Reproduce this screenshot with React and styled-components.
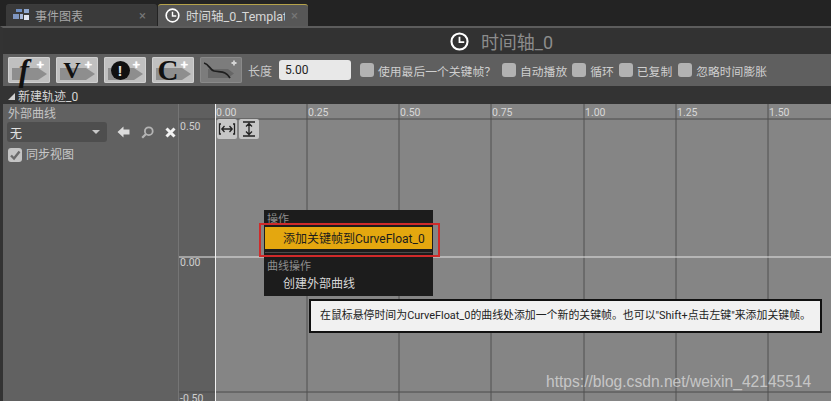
import * as React from 'react'
import styled, { createGlobalStyle } from 'styled-components'

const FONT = 'Roboto, "Noto Sans CJK SC", "Noto Sans", sans-serif'
const V_LINES = [307, 399, 491, 584, 676, 768]
const TIME_LABELS = [
  { x: 216, text: '0.00' },
  { x: 308, text: '0.25' },
  { x: 400, text: '0.50' },
  { x: 492, text: '0.75' },
  { x: 585, text: '1.00' },
  { x: 677, text: '1.25' },
  { x: 769, text: '1.50' }
]
const VALUE_LABELS = [
  { y: 16, text: '0.50' },
  { y: 152, text: '0.00' },
  { y: 288, text: '-0.50' }
]

function ClockIcon({ size = 16, color = '#fff' }) {
  return (
    <svg width={size} height={size} viewBox="0 0 18 18">
      <circle cx="9" cy="9" r="7.6" fill="none" stroke={color} strokeWidth="2" />
      <path d="M9 4.5V9.5H13.5" fill="none" stroke={color} strokeWidth="1.7" />
    </svg>
  )
}

function GraphIcon() {
  return (
    <svg width="16" height="13" viewBox="0 0 16 13">
      <rect x="3" y="0" width="6" height="3" fill="#6f8fc4" />
      <rect x="11" y="0" width="5" height="4" fill="#8fa7cf" />
      <rect x="0" y="5" width="6" height="5" fill="#7f96c0" />
      <rect x="7" y="5" width="3" height="5" fill="#a8b8d8" />
      <rect x="11" y="6" width="5" height="5" fill="#dfe4ef" />
    </svg>
  )
}

function ToolArrow() {
  return (
    <ArrowSvg viewBox="0 0 42 26">
      <path d="M4 11H30L39 17L30 23H4Z" fill="#8e8e8e" />
    </ArrowSvg>
  )
}

function CurveIcon() {
  return (
    <svg width="42" height="26" viewBox="0 0 42 26">
      <rect x="8" y="12" width="20" height="9" fill="#666" />
      <path d="M28 12L34 16.5L28 21Z" fill="#666" />
      <path d="M4 6C9 7 10 13 14 14C18 15 22 14 25 16C27 17 29 19 30 21" fill="none" stroke="#1f1f1f" strokeWidth="1.7" />
      <path d="M31.5 6H36.5M34 3.5V8.5" stroke="#d4d4d4" strokeWidth="1.8" />
    </svg>
  )
}

function CheckTick() {
  return (
    <svg width="12" height="12" viewBox="0 0 12 12">
      <path d="M2 6.5L5 9.5L10.5 2.5" fill="none" stroke="#6b6b6b" strokeWidth="2.4" />
    </svg>
  )
}

function FitButtonIcon({ vertical }) {
  return (
    <svg width="18" height="18" viewBox="0 0 18 18">
      {vertical ? (
        <path d="M3 2H15M3 16H15M9 4V14M6 6.5L9 3.5L12 6.5M6 11.5L9 14.5L12 11.5" fill="none" stroke="#222" strokeWidth="1.3" />
      ) : (
        <path d="M3 4H1.5V14H3M15 4H16.5V14H15M4 9H14M6.5 6L3.8 9L6.5 12M11.5 6L14.2 9L11.5 12" fill="none" stroke="#222" strokeWidth="1.3" />
      )}
    </svg>
  )
}

export default function App() {
  return (
    <Page>
      <GlobalStyle />
      <TabStrip>
        <Tab>
          <GraphIcon />
          <TabLabel>事件图表</TabLabel>
          <TabClose>×</TabClose>
        </Tab>
        <Tab $active>
          <ClockIcon size={15} />
          <TabLabel $active>时间轴_0_Template</TabLabel>
          <TabClose>×</TabClose>
        </Tab>
      </TabStrip>
      <Editor>
        <TitleBar>
          <ClockIcon size={19} />
          <TitleText>时间轴_0</TitleText>
        </TitleBar>
        <Toolbar>
          <ToolButton><ToolArrow /><ToolGlyph $italic>f</ToolGlyph><Plus>+</Plus></ToolButton>
          <ToolButton><ToolArrow /><ToolGlyph>V</ToolGlyph><Plus>+</Plus></ToolButton>
          <ToolButton><ToolArrow /><AlertGlyph>!</AlertGlyph><Plus>+</Plus></ToolButton>
          <ToolButton><ToolArrow /><ToolGlyph $large>C</ToolGlyph><Plus>+</Plus></ToolButton>
          <CurveButton><CurveIcon /></CurveButton>
          <LengthLabel>长度</LengthLabel>
          <LengthInput>5.00</LengthInput>
          <CheckItem $gap={6}><CheckBox /><span>使用最后一个关键帧？</span></CheckItem>
          <CheckItem $gap={5}><CheckBox /><span>自动播放</span></CheckItem>
          <CheckItem $gap={5}><CheckBox /><span>循环</span></CheckItem>
          <CheckItem $gap={6}><CheckBox /><span>已复制</span></CheckItem>
          <CheckItem $gap={6}><CheckBox /><span>忽略时间膨胀</span></CheckItem>
        </Toolbar>
        <TrackHeader>
          <TrackArrow />
          <span>新建轨迹_0</span>
        </TrackHeader>
        <TrackBody>
          <SidePanel>
            <SideLabel>外部曲线</SideLabel>
            <SelectRow>
              <Select>
                <span>无</span>
                <SelectCaret />
              </Select>
              <SelectActions>
                <svg width="13" height="12" viewBox="0 0 13 12">
                  <path d="M0.5 6L6.5 0.5V3.5H12.5V8.5H6.5V11.5Z" fill="#dcdcdc" />
                </svg>
                <svg width="13" height="13" viewBox="0 0 13 13">
                  <circle cx="7.8" cy="5.2" r="3.9" fill="none" stroke="#b4b4b4" strokeWidth="1.8" />
                  <path d="M5 8L1.2 11.8" stroke="#b4b4b4" strokeWidth="2.2" />
                </svg>
                <svg width="11" height="11" viewBox="0 0 11 11">
                  <path d="M1.5 1.5L9.5 9.5M9.5 1.5L1.5 9.5" stroke="#f2f2f2" strokeWidth="3" />
                </svg>
              </SelectActions>
            </SelectRow>
            <SyncRow>
              <CheckBox $light><CheckTick /></CheckBox>
              <span>同步视图</span>
            </SyncRow>
          </SidePanel>
          <Timeline>
            <ValueGutter />
            <PlotArea />
            <GridSvg>
              <line x1="0" y1="15" x2="653" y2="15" stroke="#4a4a4a" />
              <line x1="0" y1="288" x2="653" y2="288" stroke="#4a4a4a" />
              {V_LINES.map((x) => (
                <line key={x} x1={x - 178} y1="0" x2={x - 178} y2="297" stroke="#505050" />
              ))}
              <line x1="0" y1="153" x2="653" y2="153" stroke="#e6e6e6" />
              <line x1="37.5" y1="0" x2="37.5" y2="297" stroke="#f2f2f2" />
            </GridSvg>
            {TIME_LABELS.map((l) => (
              <TimeLabel key={l.text} style={{ left: l.x - 178 }}>{l.text}</TimeLabel>
            ))}
            {VALUE_LABELS.map((l) => (
              <ValueLabel key={l.text} style={{ top: l.y }}>{l.text}</ValueLabel>
            ))}
            <FitButtons>
              <FitButton><FitButtonIcon /></FitButton>
              <FitButton><FitButtonIcon vertical /></FitButton>
            </FitButtons>
            <Menu>
              <MenuHeading>操作</MenuHeading>
              <MenuItem $active>添加关键帧到CurveFloat_0</MenuItem>
              <MenuDivider />
              <MenuHeading>曲线操作</MenuHeading>
              <MenuItem>创建外部曲线</MenuItem>
              <RedMark />
            </Menu>
            <Tooltip>在鼠标悬停时间为CurveFloat_0的曲线处添加一个新的关键帧。也可以"Shift+点击左键"来添加关键帧。</Tooltip>
            <Watermark>https://blog.csdn.net/weixin_42145514</Watermark>
          </Timeline>
        </TrackBody>
      </Editor>
    </Page>
  )
}

const GlobalStyle = createGlobalStyle`
  html, body {
    margin: 0;
    background: #222;
    overflow: hidden;
  }

  * {
    box-sizing: border-box;
  }
`

const Page = styled.div`
  width: 831px;
  height: 401px;
  display: flex;
  flex-direction: column;
  background: #232323;
  font-family: ${FONT};
  font-size: 12px;
  overflow: hidden;
`

const TabStrip = styled.div`
  height: 26px;
  display: flex;
  align-items: flex-end;
  gap: 1px;
  padding-left: 6px;
`

const Tab = styled.div`
  width: ${({ $active }) => ($active ? '150px' : '151px')};
  height: 22px;
  display: flex;
  align-items: center;
  gap: 6px;
  padding-left: 7px;
  border-top: 1px solid ${({ $active }) => ($active ? '#b5a24a' : '#3c3c3c')};
  border-radius: 3px 3px 0 0;
  background: ${({ $active }) => ($active ? '#575757' : '#3a3a3a')};
`

const TabLabel = styled.span`
  width: ${({ $active }) => ($active ? '99px' : '98px')};
  overflow: hidden;
  white-space: nowrap;
  font-size: ${({ $active }) => ($active ? '12.5px' : '12px')};
  color: ${({ $active }) => ($active ? '#d8d8d8' : '#a8a8a8')};
`

const TabClose = styled.span`
  font-size: 13px;
  line-height: 1;
  color: #777;
`

const Editor = styled.div`
  flex: 1;
  display: flex;
  flex-direction: column;
  min-height: 0;
  border-top: 2px solid #5c5c5c;
  border-left: 3px solid #333;
`

const TitleBar = styled.div`
  height: 26px;
  display: flex;
  align-items: center;
  justify-content: center;
  gap: 12px;
  padding-left: 169px;
  background: #323232;
`

const TitleText = styled.span`
  font-size: 18px;
  color: #8c8c8c;
`

const Toolbar = styled.div`
  height: 32px;
  display: flex;
  align-items: center;
  gap: 6px;
  padding-left: 5px;
  background: #5f5f5f;
`

const ToolButton = styled.div`
  position: relative;
  width: 42px;
  height: 26px;
  display: flex;
  align-items: center;
  justify-content: center;
  padding-right: 10px;
  border-radius: 2px;
  background: #c0c0c0;
  box-shadow: inset 0 0 0 1px #d0d0d0;
`

const ArrowSvg = styled.svg`
  position: absolute;
  inset: 0;
  width: 42px;
  height: 26px;
`

const ToolGlyph = styled.span`
  position: relative;
  font-family: "Liberation Serif", serif;
  font-size: ${({ $large, $italic }) => ($large ? '29px' : $italic ? '31px' : '24px')};
  font-weight: bold;
  font-style: ${({ $italic }) => ($italic ? 'italic' : 'normal')};
  line-height: 1;
  color: #111;
`

const AlertGlyph = styled.span`
  position: relative;
  width: 19px;
  height: 19px;
  display: flex;
  align-items: center;
  justify-content: center;
  border-radius: 50%;
  background: #111;
  font-family: "Liberation Sans", sans-serif;
  font-size: 15px;
  font-weight: bold;
  color: #ddd;
`

const Plus = styled.span`
  position: absolute;
  top: 1px;
  right: 6px;
  font-family: "Liberation Sans", sans-serif;
  font-size: 13px;
  font-weight: bold;
  line-height: 1;
  color: #fff;
  text-shadow: 0 0 1px #fff;
`

const CurveButton = styled.div`
  width: 42px;
  height: 26px;
  border-radius: 2px;
  background: #7c7c7c;
  box-shadow: inset 0 0 0 1px #8a8a8a;
`

const LengthLabel = styled.span`
  width: 24px;
  margin-right: 1px;
  color: #c8c8c8;
`

const LengthInput = styled.div`
  width: 72px;
  height: 20px;
  margin-right: 3px;
  padding-left: 6px;
  border-radius: 3px;
  background: #e8e8e8;
  line-height: 20px;
  font-size: 12px;
  color: #222;
`

const CheckItem = styled.div`
  display: flex;
  align-items: center;
  gap: 4px;
  margin-right: ${({ $gap }) => $gap - 6}px;
  color: #cfcfcf;
  white-space: nowrap;
  font-size: 11.8px;
`

const CheckBox = styled.div`
  width: 14px;
  height: 14px;
  flex: none;
  display: flex;
  align-items: center;
  justify-content: center;
  border-radius: 3px;
  background: ${({ $light }) => ($light ? '#c4c4c4' : '#b2b2b2')};
`

const TrackHeader = styled.div`
  height: 18px;
  display: flex;
  align-items: center;
  gap: 3px;
  padding-left: 5px;
  background: #333;
  color: #d6d6d6;
  font-size: 12px;
`

const TrackArrow = styled.span`
  width: 0;
  height: 0;
  margin-top: 2px;
  border-left: 7px solid transparent;
  border-bottom: 7px solid #d0d0d0;
`

const TrackBody = styled.div`
  flex: 1;
  display: flex;
  min-height: 0;
`

const SidePanel = styled.div`
  width: 175px;
  padding-left: 5px;
  background: #616161;
  color: #d4d4d4;
`

const SideLabel = styled.div`
  height: 18px;
  line-height: 20px;
  font-size: 12px;
  color: #c4c4c4;
`

const SelectRow = styled.div`
  display: flex;
  align-items: center;
`

const Select = styled.div`
  width: 100px;
  height: 20px;
  margin-left: -1px;
  display: flex;
  align-items: center;
  justify-content: space-between;
  padding: 0 7px 0 3px;
  border-radius: 3px;
  background: #4e4e4e;
  color: #e2e2e2;
`

const SelectCaret = styled.span`
  width: 0;
  height: 0;
  border-left: 4px solid transparent;
  border-right: 4px solid transparent;
  border-top: 4px solid #c8c8c8;
`

const SelectActions = styled.div`
  display: flex;
  align-items: center;
  gap: 11px;
  margin-left: 10px;
`

const SyncRow = styled.div`
  height: 14px;
  display: flex;
  align-items: center;
  gap: 4px;
  margin-top: 6px;
  line-height: 14px;
  color: #c8c8c8;
`

const Timeline = styled.div`
  position: relative;
  flex: 1;
  display: flex;
  border-left: 1px solid #757575;
  overflow: hidden;
`

const ValueGutter = styled.div`
  width: 36px;
  background: #5f5f5f;
`

const PlotArea = styled.div`
  flex: 1;
  background: #858585;
`

const GridSvg = styled.svg.attrs({ width: 653, height: 297 })`
  position: absolute;
  top: 0;
  left: -1px;
`

const TimeLabel = styled.span`
  position: absolute;
  top: 2px;
  margin-left: -1px;
  font-size: 10.5px;
  line-height: 13px;
  color: #d8d8d8;
`

const ValueLabel = styled.span`
  position: absolute;
  left: 1px;
  font-size: 10.5px;
  line-height: 13px;
  color: #cfcfcf;
`

const FitButtons = styled.div`
  position: absolute;
  top: 15px;
  left: 38px;
  display: flex;
  gap: 2px;
`

const FitButton = styled.div`
  width: 20px;
  height: 20px;
  display: flex;
  align-items: center;
  justify-content: center;
  border-radius: 2px;
  background: #c6c6c6;
`

const Menu = styled.div`
  position: absolute;
  top: 106px;
  left: 85px;
  width: 169px;
  height: 86px;
  padding: 1px 1px 0;
  background: #1c1c1c;
`

const MenuHeading = styled.div`
  height: 16px;
  padding-left: 2px;
  font-size: 11px;
  line-height: 17px;
  color: #8e8e8e;
`

const MenuDivider = styled.div`
  height: 1px;
  margin: 3px 0 5px;
  background: #4a4a4a;
`

const MenuItem = styled.div`
  height: ${({ $active }) => ($active ? '22px' : '21px')};
  padding-left: 18px;
  background: ${({ $active }) => ($active ? '#e4a70f' : 'transparent')};
  font-size: 12px;
  line-height: ${({ $active }) => ($active ? '25px' : '21px')};
  color: ${({ $active }) => ($active ? '#1c1c1c' : '#d8d8d8')};
`

const RedMark = styled.div`
  position: absolute;
  top: 13px;
  left: -5px;
  width: 181px;
  height: 34px;
  border: 2px solid #cf2a2a;
`

const Tooltip = styled.div`
  position: absolute;
  top: 195px;
  left: 130px;
  width: 513px;
  height: 34px;
  padding-left: 9px;
  border: 2px solid #111;
  background: #f1f1f1;
  font-size: 10.9px;
  line-height: 30px;
  color: #222;
  white-space: nowrap;
`

const Watermark = styled.span`
  position: absolute;
  top: 269px;
  left: 367px;
  font-family: "Liberation Sans", sans-serif;
  font-size: 15.6px;
  color: rgba(255, 255, 255, 0.55);
  white-space: nowrap;
`
